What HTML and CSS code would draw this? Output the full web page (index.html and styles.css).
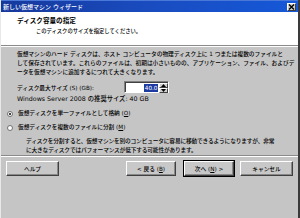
FILE: index.html
```html
<!DOCTYPE html>
<html lang="ja">
<head>
<meta charset="utf-8">
<link rel="stylesheet" href="styles.css">
</head>
<body>
<div class="win">
  <div class="titlebar">
    <span class="ttl">新しい仮想マシン ウィザード</span>
    <span class="close"><svg width="7" height="6" viewBox="0 0 7 6"><path d="M1 0.5 L6 5.5 M6 0.5 L1 5.5" stroke="#000" stroke-width="1.4"/></svg></span>
  </div>
  <div class="header">
    <div class="h1">ディスク容量の指定</div>
    <div class="h2">このディスクのサイズを指定してください。</div>
  </div>
  <div class="sep"></div>
  <div class="content">
    <p class="para">仮想マシンのハード ディスクは、ホスト コンピュータの物理ディスク上に 1 つまたは複数のファイルと<br>して保存されています。これらのファイルは、初期は小さいものの、アプリケーション、ファイル、およびデ<br>ータを仮想マシンに追加するにつれて大きくなります。</p>
    <div class="sizerow">
      <span class="lbl">ディスク最大サイズ (S) (GB):</span>
      <div class="spin">
        <span class="val"><span class="sel">40.0</span></span>
        <span class="arrows">
          <span class="arr"><svg width="5" height="3" viewBox="0 0 5 3"><path d="M0 3 L2.5 0 L5 3Z" fill="#000"/></svg></span>
          <span class="arr"><svg width="5" height="3" viewBox="0 0 5 3"><path d="M0 0 L2.5 3 L5 0Z" fill="#000"/></svg></span>
        </span>
      </div>
    </div>
    <div class="rec">Windows Server 2008 の推奨サイズ: 40 GB</div>
    <div class="radios">
      <div class="radio"><span class="dot on"></span><span>仮想ディスクを単一ファイルとして格納 (<u>O</u>)</span></div>
      <div class="radio"><span class="dot"></span><span>仮想ディスクを複数のファイルに分割 (<u>M</u>)</span></div>
    </div>
    <p class="note">ディスクを分割すると、仮想マシンを別のコンピュータに容易に移動できるようになりますが、非常<br>に大きなディスクではパフォーマンスが低下する可能性があります。</p>
  </div>
  <div class="sep"></div>
  <div class="footer">
    <span class="btn help">ヘルプ</span>
    <span class="spacer"></span>
    <span class="btn">&lt; 戻る (<u>B</u>)</span>
    <span class="btn def">次へ (<u>N</u>) &gt;</span>
    <span class="btn cancel">キャンセル</span>
  </div>
</div>
</body>
</html>
```

FILE: styles.css
```css
* { box-sizing: border-box; }
html, body {
  margin: 0;
  padding: 0;
  background: #c5c5c5;
}
body {
  font-family: "DejaVu Sans", "Noto Sans CJK JP", sans-serif;
  font-size: 5.7px;
  font-weight: 500;
  color: #000;
}
.win {
  width: 300px;
  height: 218px;
  display: flex;
  flex-direction: column;
  border-right: 2px solid #3a3a3a;
  border-left: 1px solid #e8e8e8;
  background: #c5c5c5;
}
.titlebar {
  height: 12px;
  flex: none;
  display: flex;
  align-items: center;
  justify-content: space-between;
  padding: 0 2px 0 2px;
  background: linear-gradient(to right, #15389c 0%, #1a4cc0 50%, #1558d8 100%);
  border-top: 1px solid #4a78d8;
}
.ttl {
  color: #fff;
  font-size: 6px;
  line-height: 10px;
}
.close {
  width: 9px;
  height: 8px;
  background: #d0d0d0;
  border: 1px solid;
  border-color: #fff #404040 #404040 #fff;
  display: flex;
  align-items: center;
  justify-content: center;
}
.header {
  height: 33px;
  flex: none;
  background: #fff;
  padding: 4px 0 0 16px;
}
.h1 {
  font-weight: bold;
  font-size: 6.6px;
  line-height: 10px;
}
.h2 {
  padding-left: 19px;
  font-size: 5.3px;
  line-height: 10px;
}
.sep {
  flex: none;
  height: 2px;
  border-top: 1px solid #8a8a8a;
  border-bottom: 1px solid #fff;
}
.content {
  flex: 1;
  padding: 3px 0 0 16px;
  white-space: nowrap;
}
.para {
  margin: 0;
  line-height: 9px;
}
.sizerow {
  display: flex;
  align-items: center;
  margin-top: 4px;
  height: 12px;
}
.lbl {
  width: 107px;
}
.spin {
  display: flex;
  height: 12px;
  border: 1px solid;
  border-color: #808080 #fff #fff #808080;
}
.val {
  width: 34px;
  background: #fff;
  display: flex;
  align-items: center;
  justify-content: flex-end;
  padding-right: 1px;
  border-top: 1px solid #404040;
  border-left: 1px solid #404040;
}
.sel {
  background: #1c3aa0;
  color: #fff;
  line-height: 8px;
  padding: 0 0.5px;
}
.arrows {
  width: 9px;
  display: flex;
  flex-direction: column;
  border-top: 1px solid #404040;
}
.arr {
  flex: 1;
  background: #d0d0d0;
  border: 1px solid;
  border-color: #fff #404040 #404040 #fff;
  display: flex;
  align-items: center;
  justify-content: center;
}
.rec {
  font-size: 6.3px;
  line-height: 9px;
  margin-top: 1px;
}
.radios {
  margin-top: 6px;
  display: flex;
  flex-direction: column;
  gap: 5px;
}
.radio {
  display: flex;
  align-items: center;
  gap: 5px;
  line-height: 9px;
  margin-left: -10px;
}
.dot {
  width: 6px;
  height: 6px;
  border-radius: 50%;
  background: #fff;
  border: 1px solid #707070;
  display: flex;
  align-items: center;
  justify-content: center;
}
.dot.on::after {
  content: "";
  width: 2px;
  height: 2px;
  border-radius: 50%;
  background: #000;
}
.note {
  margin: 5px 0 0 9px;
  line-height: 9px;
  letter-spacing: -0.15px;
}
.footer {
  flex: 1;
  display: flex;
  align-items: flex-start;
  padding: 4px 5px 0 5px;
}
.spacer { flex: 1; }
.btn {
  width: 50px;
  height: 15px;
  display: flex;
  align-items: center;
  justify-content: center;
  border: 1px solid;
  border-color: #fff #404040 #404040 #fff;
  box-shadow: inset -1px -1px 0 #888;
  background: #c8c8c8;
}
.btn.help { width: 53px; }
.btn.def {
  margin-left: 8px;
  outline: 1px solid #000;
}
.btn.cancel { margin-left: 6px; width: 53px; }
u { text-decoration: underline; text-underline-offset: 0.5px; }
```
